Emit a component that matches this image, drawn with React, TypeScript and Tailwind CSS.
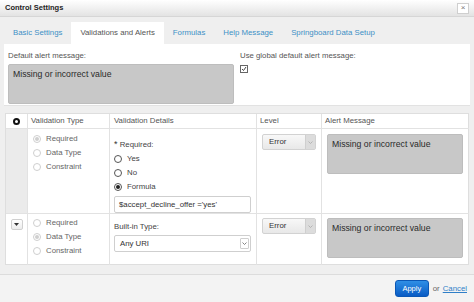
import React from "react";

type RadioProps = { checked?: boolean; dim?: boolean; label: string };

function Radio({ checked, dim, label }: RadioProps) {
  return (
    <div className="flex items-center h-[14px] gap-[5px]">
      <span
        className={
          "w-[8px] h-[8px] rounded-full border flex items-center justify-center bg-white " +
          (dim ? "border-[#cfcfcf]" : "border-[#555]")
        }
      >
        {checked && (
          <span className={"w-[4px] h-[4px] rounded-full " + (dim ? "bg-[#cfcfcf]" : "bg-[#222]")} />
        )}
      </span>
      <span className={dim ? "text-[#666]" : "text-[#444]"}>{label}</span>
    </div>
  );
}

function LevelSelect() {
  return (
    <div className="w-[54px] h-[16px] flex border border-[#d2d2d2] rounded-[2px] bg-gradient-to-b from-[#f8f8f8] to-[#e8e8e8]">
      <span className="flex-1 pl-[6px] leading-[14px] text-[#333]">Error</span>
      <span className="w-[10px] bg-[#dcdcdc] border-l border-[#cfcfcf] flex items-center justify-center">
        <svg width="5" height="3" viewBox="0 0 5 3">
          <path d="M0.5 0.5 L2.5 2.5 L4.5 0.5" fill="none" stroke="#aaa" strokeWidth="0.8" />
        </svg>
      </span>
    </div>
  );
}

function AlertBox({ h }: { h: string }) {
  return (
    <div className={"w-[136px] bg-[#c8c8c8] border border-[#bdbdbd] rounded-[2px] px-[4px] pt-[3px] text-[8.7px] text-[#2a2a2a] " + h}>
      Missing or incorrect value
    </div>
  );
}

export default function App() {
  const tabs = ["Basic Settings", "Validations and Alerts", "Formulas", "Help Message", "Springboard Data Setup"];
  return (
    <div className="w-[474px] h-[302px] overflow-hidden bg-[#efefef] text-[7.8px] text-[#555] font-['Liberation_Sans',Arial,sans-serif] flex flex-col">
      {/* title bar */}
      <div className="h-[17px] shrink-0 bg-gradient-to-b from-white to-[#e3e3e3] border-b border-[#d6d6d6] flex items-center justify-between pl-[5px] pr-[5px]">
        <span className="font-bold text-[7.5px] text-[#222]">Control Settings</span>
        <span className="w-[12px] h-[11px] border border-[#cfcfcf] bg-white flex items-center justify-center text-[8px] text-[#777] leading-none">
          ×
        </span>
      </div>

      {/* tabs */}
      <div className="h-[27px] shrink-0 flex items-end pl-[4px]">
        {tabs.map((t, i) => (
          <div
            key={t}
            className={
              "h-[22px] px-[9px] flex items-center " +
              (i === 1 ? "bg-white text-[#555]" : "text-[#3d8fc6]")
            }
          >
            {t}
          </div>
        ))}
      </div>

      {/* default alert panel */}
      <div className="mx-[4px] h-[62px] shrink-0 bg-white border-b border-[#e2e2e2] flex px-[4px] pt-[7px]">
        <div className="w-[226px] flex flex-col">
          <span className="leading-[9px]">Default alert message:</span>
          <div className="mt-[4px] h-[40px] bg-[#c8c8c8] border border-[#bdbdbd] rounded-[2px] px-[4px] pt-[3px] text-[8.7px] text-[#2a2a2a]">
            Missing or incorrect value
          </div>
        </div>
        <div className="ml-[6px] flex flex-col">
          <span className="leading-[9px]">Use global default alert message:</span>
          <span className="mt-[5px] w-[8px] h-[8px] border border-[#666] bg-white flex items-center justify-center">
            <svg width="6" height="6" viewBox="0 0 6 6">
              <path d="M1 3 L2.5 4.5 L5 1" fill="none" stroke="#333" strokeWidth="0.9" />
            </svg>
          </span>
        </div>
      </div>

      {/* validation table */}
      <div className="mx-[5px] mt-[7px] w-[464px] h-[152px] shrink-0 bg-white border border-[#dedede] grid grid-cols-[22px_82px_147px_65px_147px] grid-rows-[15px_85px_51px]">
        {/* header */}
        <div className="border-r border-b border-[#e2e2e2] flex items-center justify-center">
          <span className="w-[7px] h-[7px] rounded-full border-[2px] border-[#111]" />
        </div>
        <div className="border-r border-b border-[#e2e2e2] flex items-center pl-[3px]">Validation Type</div>
        <div className="border-r border-b border-[#e2e2e2] flex items-center pl-[4px]">Validation Details</div>
        <div className="border-r border-b border-[#e2e2e2] flex items-center pl-[3px]">Level</div>
        <div className="border-b border-[#e2e2e2] flex items-center pl-[3px]">Alert Message</div>

        {/* row 1 */}
        <div className="bg-[#ebebeb] border-r border-b border-[#e2e2e2]" />
        <div className="border-r border-b border-[#e2e2e2] pl-[5px] pt-[3px] flex flex-col">
          <Radio dim checked label="Required" />
          <Radio dim label="Data Type" />
          <Radio dim label="Constraint" />
        </div>
        <div className="border-r border-b border-[#e2e2e2] pl-[4px] pt-[10px] flex flex-col">
          <span className="leading-[10px] text-[#444]">
            <span className="text-[9px] text-[#333]">*</span> Required:
          </span>
          <div className="mt-[2px]">
            <Radio label="Yes" />
            <Radio label="No" />
            <Radio checked label="Formula" />
          </div>
          <div className="mt-[2px] w-[137px] h-[17px] border border-[#cfcfcf] rounded-[2px] pl-[4px] flex items-center text-[7.8px] text-[#333]">
            $accept_decline_offer ='yes'
          </div>
        </div>
        <div className="border-r border-b border-[#e2e2e2] pl-[5px] pt-[5px]">
          <LevelSelect />
        </div>
        <div className="border-b border-[#e2e2e2] pl-[5px] pt-[5px]">
          <AlertBox h="h-[40px]" />
        </div>

        {/* row 2 */}
        <div className="border-r border-[#e2e2e2] flex justify-center pt-[5px]">
          <span className="w-[12px] h-[11px] border border-[#d0d0d0] rounded-[2px] bg-gradient-to-b from-white to-[#ececec] flex items-center justify-center">
            <svg width="5" height="3" viewBox="0 0 5 3">
              <path d="M0 0 L5 0 L2.5 3 Z" fill="#333" />
            </svg>
          </span>
        </div>
        <div className="border-r border-[#e2e2e2] pl-[5px] pt-[2px] flex flex-col">
          <Radio dim label="Required" />
          <Radio dim checked label="Data Type" />
          <Radio dim label="Constraint" />
        </div>
        <div className="border-r border-[#e2e2e2] pl-[4px] pt-[8px] flex flex-col">
          <span className="leading-[10px] text-[#444]">Built-in Type:</span>
          <div className="mt-[3px] w-[137px] h-[17px] border border-[#cfcfcf] rounded-[2px] pl-[5px] pr-[1px] flex items-center justify-between text-[7.8px] text-[#333]">
            <span>Any URI</span>
            <span className="w-[9px] h-[11px] border border-[#cfcfcf] rounded-[1px] flex items-center justify-center">
              <svg width="5" height="3" viewBox="0 0 5 3">
                <path d="M0.5 0.5 L2.5 2.5 L4.5 0.5" fill="none" stroke="#666" strokeWidth="0.8" />
              </svg>
            </span>
          </div>
        </div>
        <div className="border-r border-[#e2e2e2] pl-[5px] pt-[4px]">
          <LevelSelect />
        </div>
        <div className="pl-[5px] pt-[4px]">
          <AlertBox h="h-[40px]" />
        </div>
      </div>

      {/* footer */}
      <div className="mt-[9px] flex-1 bg-[#f3f3f3] border-t border-[#dcdcdc] flex items-center justify-end pr-[7px] gap-[3px]">
        <span className="w-[34px] h-[17px] rounded-[3px] bg-gradient-to-b from-[#2f8fe6] to-[#0a5bc4] border border-[#0b57b5] text-white text-[7.5px] flex items-center justify-center">
          Apply
        </span>
        <span className="text-[#666] ml-[1px]">or</span>
        <span className="text-[#2f7fc8] underline">Cancel</span>
      </div>
    </div>
  );
}
